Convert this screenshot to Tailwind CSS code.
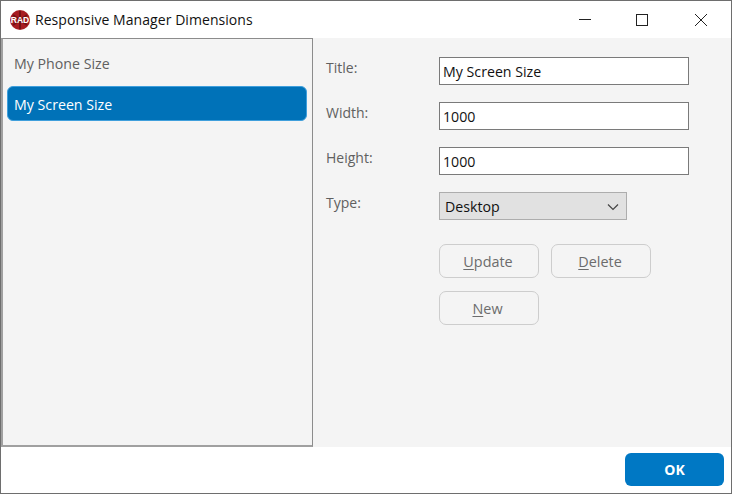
<!DOCTYPE html>
<html lang="en">
<head>
  <meta charset="UTF-8" />
  <title>Responsive Manager Dimensions</title>
  <script src="https://cdn.jsdelivr.net/npm/@tailwindcss/browser@4"></script>
</head>
<body class="w-[732px] h-[494px] overflow-hidden bg-white font-['Open_Sans',sans-serif]">
  <div class="w-full h-full flex flex-col border border-[#6e6e6e]">
    <!-- title bar -->
    <header class="h-[37px] shrink-0 flex items-center bg-white">
      <svg class="ml-[9px] w-5 h-5" viewBox="0 0 20 20">
        <circle cx="10" cy="10" r="10" fill="#a81c22" />
        <path d="M3 5l14 10M3 15L17 5M10 1v18" stroke="#741216" stroke-width="2" />
        <text x="10" y="13" text-anchor="middle" font-family="Liberation Sans" font-size="8.5" font-weight="700" fill="#fff">RAD</text>
      </svg>
      <span class="ml-[5px] text-[14px] text-[#111] tracking-[0.06px]">Responsive Manager Dimensions</span>
      <div class="ml-auto flex items-center">
        <svg class="w-[46px] h-[37px]" viewBox="0 0 46 37"><path d="M11 18.5h12" stroke="#222" fill="none" /></svg>
        <svg class="w-[46px] h-[37px] ml-[12px]" viewBox="0 0 46 37"><rect x="10.5" y="13.5" width="11" height="11" stroke="#222" fill="none" /></svg>
        <svg class="w-[46px] h-[37px] ml-[13px]" viewBox="0 0 46 37"><path d="M10 13l12 12M22 13L10 25" stroke="#222" fill="none" /></svg>
      </div>
    </header>

    <main class="h-[409px] shrink-0 flex bg-[#f4f4f4]">
      <!-- dimension list -->
      <aside class="w-[312px] h-full border border-[#8c8c8c] border-b-2 border-b-[#a0a0a0] border-l-2 border-l-[#a0a0a0] pt-[12px] pl-[4px] pr-[5px]">
        <div class="h-[26px] pl-[7px] flex items-center text-[14.2px] text-[#606060]">My Phone Size</div>
        <div class="mt-[9px] h-[35px] pl-[6px] pt-[2px] flex items-center rounded-[6px] bg-[#0072b8] border border-[#3f9fdc] text-[14.2px] text-white">My Screen Size</div>
      </aside>

      <!-- edit form -->
      <section class="flex-1 pt-[19px] pl-[13px]">
        <div class="flex h-[28px]">
          <label class="w-[113px] text-[14px] leading-[22px] text-[#606060]">Title:</label>
          <input class="w-[250px] h-[28px] px-[3px] bg-white border border-[#7a7a7a] text-[14.2px] text-[#111]" value="My Screen Size" />
        </div>
        <div class="flex h-[28px] mt-[17px]">
          <label class="w-[113px] text-[14px] leading-[22px] text-[#606060]">Width:</label>
          <input class="w-[250px] h-[28px] px-[3px] bg-white border border-[#7a7a7a] text-[14.2px] text-[#111]" value="1000" />
        </div>
        <div class="flex h-[28px] mt-[17px]">
          <label class="w-[113px] text-[14px] leading-[22px] text-[#606060]">Height:</label>
          <input class="w-[250px] h-[28px] px-[3px] bg-white border border-[#7a7a7a] text-[14.2px] text-[#111]" value="1000" />
        </div>
        <div class="flex h-[28px] mt-[17px]">
          <label class="w-[113px] text-[14px] leading-[22px] text-[#606060]">Type:</label>
          <div class="w-[188px] h-[28px] pl-[5px] pr-[7px] pt-[1px] flex items-center justify-between bg-[#e1e1e1] border border-[#adadad] text-[14.2px] text-[#111]">
            <span>Desktop</span>
            <svg class="w-3 h-2" viewBox="0 0 12 8"><path d="M1 1.5l5 5 5-5" stroke="#444" stroke-width="1.2" fill="none" /></svg>
          </div>
        </div>
        <div class="ml-[113px] mt-[24px] w-[220px] flex flex-wrap gap-x-[12px] gap-y-[13px]">
          <button class="w-[100px] h-[34px] pt-[2px] pr-[2px] rounded-[7px] border border-[#cdcdcd] bg-[#f4f4f4] text-[14.4px] text-[#6c6c6c]"><span class="underline underline-offset-2">U</span>pdate</button>
          <button class="w-[100px] h-[34px] pt-[2px] pr-[2px] rounded-[7px] border border-[#cdcdcd] bg-[#f4f4f4] text-[14.4px] text-[#6c6c6c]"><span class="underline underline-offset-2">D</span>elete</button>
          <button class="w-[100px] h-[34px] pt-[2px] pr-[3px] rounded-[7px] border border-[#cdcdcd] bg-[#f4f4f4] text-[14.4px] text-[#6c6c6c]"><span class="underline underline-offset-2">N</span>ew</button>
        </div>
      </section>
    </main>

    <footer class="flex-1 flex items-start justify-end pt-[6px] pr-[7px] bg-white">
      <button class="w-[99px] h-[33px] rounded-[6px] bg-[#0078c4] text-[14px] font-bold text-white">OK</button>
    </footer>
  </div>
</body>
</html>
